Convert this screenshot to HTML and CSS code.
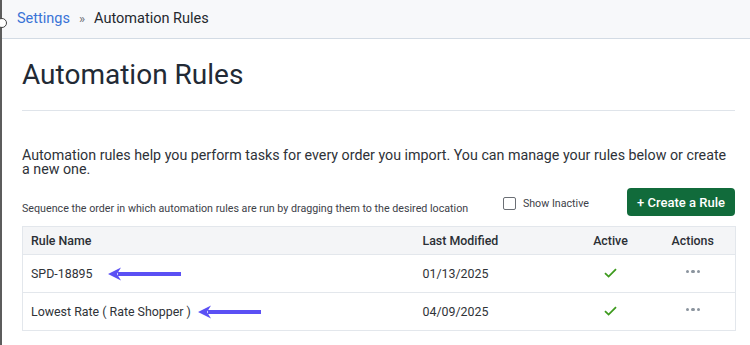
FILE: index.html
```html
<!DOCTYPE html>
<html>
<head>
<meta charset="utf-8">
<link rel="stylesheet" href="styles.css">
</head>
<body>
<div class="frame">
  <span class="edge-knob"></span>
  <header class="crumbs">
    <a class="crumb-link">Settings</a>
    <span class="crumb-sep">»</span>
    <span class="crumb-current">Automation Rules</span>
  </header>
  <main class="content">
    <h1 class="title">Automation Rules</h1>
    <hr class="rule">
    <p class="intro">Automation rules help you perform tasks for every order you import. You can manage your rules below or create a new one.</p>
    <div class="toolbar">
      <span class="hint">Sequence the order in which automation rules are run by dragging them to the desired location</span>
      <label class="toggle"><span class="box"></span>Show Inactive</label>
      <button class="btn-create">+ Create a Rule</button>
    </div>
    <table class="rules">
      <colgroup>
        <col class="c-name"><col class="c-mod"><col class="c-active"><col class="c-actions">
      </colgroup>
      <thead>
        <tr><th>Rule Name</th><th>Last Modified</th><th class="center">Active</th><th class="center">Actions</th></tr>
      </thead>
      <tbody>
        <tr>
          <td><span class="name">SPD-18895<svg class="arrow a1" width="73" height="14" viewBox="0 0 73 14"><path d="M73 7H10" stroke="#5b50f4" stroke-width="4"/><path d="M0 7L13 0.5L9 7L13 13.5Z" fill="#5b50f4"/></svg></span></td>
          <td>01/13/2025</td>
          <td class="center"><svg width="13" height="10" viewBox="0 0 13 10"><path d="M1 5.2L4.6 8.6L12 1.2" fill="none" stroke="#3d9a1d" stroke-width="1.8"/></svg></td>
          <td class="center"><span class="dots"><i></i><i></i><i></i></span></td>
        </tr>
        <tr>
          <td><span class="name">Lowest Rate ( Rate Shopper )<svg class="arrow a2" width="63" height="14" viewBox="0 0 63 14"><path d="M63 7H10" stroke="#5b50f4" stroke-width="4"/><path d="M0 7L13 0.5L9 7L13 13.5Z" fill="#5b50f4"/></svg></span></td>
          <td>04/09/2025</td>
          <td class="center"><svg width="13" height="10" viewBox="0 0 13 10"><path d="M1 5.2L4.6 8.6L12 1.2" fill="none" stroke="#3d9a1d" stroke-width="1.8"/></svg></td>
          <td class="center"><span class="dots"><i></i><i></i><i></i></span></td>
        </tr>
      </tbody>
    </table>
  </main>
</div>
</body>
</html>
```
FILE: styles.css
```css
* { box-sizing: border-box; }
html, body { margin: 0; padding: 0; background: #fff; }
body { font-family: Roboto, "Liberation Sans", sans-serif; color: #2b2f36; }
.frame {
  position: relative;
  min-height: 345px;
  border-left: 2px solid #5c5c5c;
}
.edge-knob {
  position: absolute;
  left: -5px;
  top: 18px;
  width: 10px;
  height: 10px;
  border: 1px solid #444;
  border-radius: 50%;
  background: #fff;
}
.crumbs {
  height: 39px;
  background: #f7f8fa;
  border-bottom: 1px solid #d3dbe4;
  display: flex;
  align-items: center;
  padding-left: 15px;
  font-size: 14.5px;
  gap: 9px;
  padding-bottom: 2px;
}
.crumb-link { color: #3a73d6; }
.crumb-sep { color: #6e7379; font-size: 13px; }
.crumb-current { color: #24282e; }
.content { padding: 0 15px 0 20px; }
.title {
  margin: 19px 0 0;
  font-size: 28px;
  line-height: 34px;
  font-weight: 400;
  color: #222a35;
}
.rule {
  margin: 18px 0 0;
  border: 0;
  border-top: 1px solid #dfe4ea;
}
.intro {
  margin: 37px 0 0;
  font-size: 14.25px;
  line-height: 14px;
  color: #2e3238;
}
.toolbar {
  margin-top: 12px;
  display: flex;
  align-items: center;
  height: 28px;
}
.hint {
  font-size: 10.7px;
  color: #3d4148;
  padding-top: 13px;
  flex: 1;
}
.toggle {
  display: flex;
  align-items: center;
  font-size: 10.7px;
  color: #3d4148;
  gap: 7px;
  margin-right: 38px;
  margin-top: 2px;
}
.box {
  width: 13px;
  height: 13px;
  border: 1px solid #6b6f75;
  border-radius: 2px;
  background: #fff;
}
.btn-create {
  height: 28px;
  width: 108px;
  border: 0;
  border-radius: 4px;
  background: #116b3b;
  color: #fff;
  font-family: Roboto, "Liberation Sans", sans-serif;
  font-size: 13px;
  font-weight: 500;
  padding: 0;
}
.rules {
  margin-top: 10px;
  width: 713px;
  border-collapse: collapse;
  border: 1px solid #e3e7ec;
  font-size: 12.4px;
  color: #2f3338;
  table-layout: fixed;
}
.c-name { width: 392px; }
.c-mod { width: 156px; }
.c-active { width: 80px; }
.c-actions { width: 85px; }
.rules th {
  background: #f4f5f7;
  font-weight: 500;
  text-align: left;
  height: 28px;
  padding: 0 8px;
  border-bottom: 1px solid #e3e7ec;
  color: #2b2f35;
}
.rules td {
  height: 38px;
  padding: 0 8px;
  border-bottom: 1px solid #e3e7ec;
}
.rules .center { text-align: center; }
.name { display: inline-flex; align-items: center; }
.arrow { display: block; }
.a1 { margin-left: 15px; }
.a2 { margin-left: 7px; }
.dots { display: inline-flex; gap: 2px; vertical-align: middle; padding-bottom: 6px; }
.dots i { width: 3.5px; height: 3.5px; border-radius: 50%; background: #8b949e; display: block; }
```
